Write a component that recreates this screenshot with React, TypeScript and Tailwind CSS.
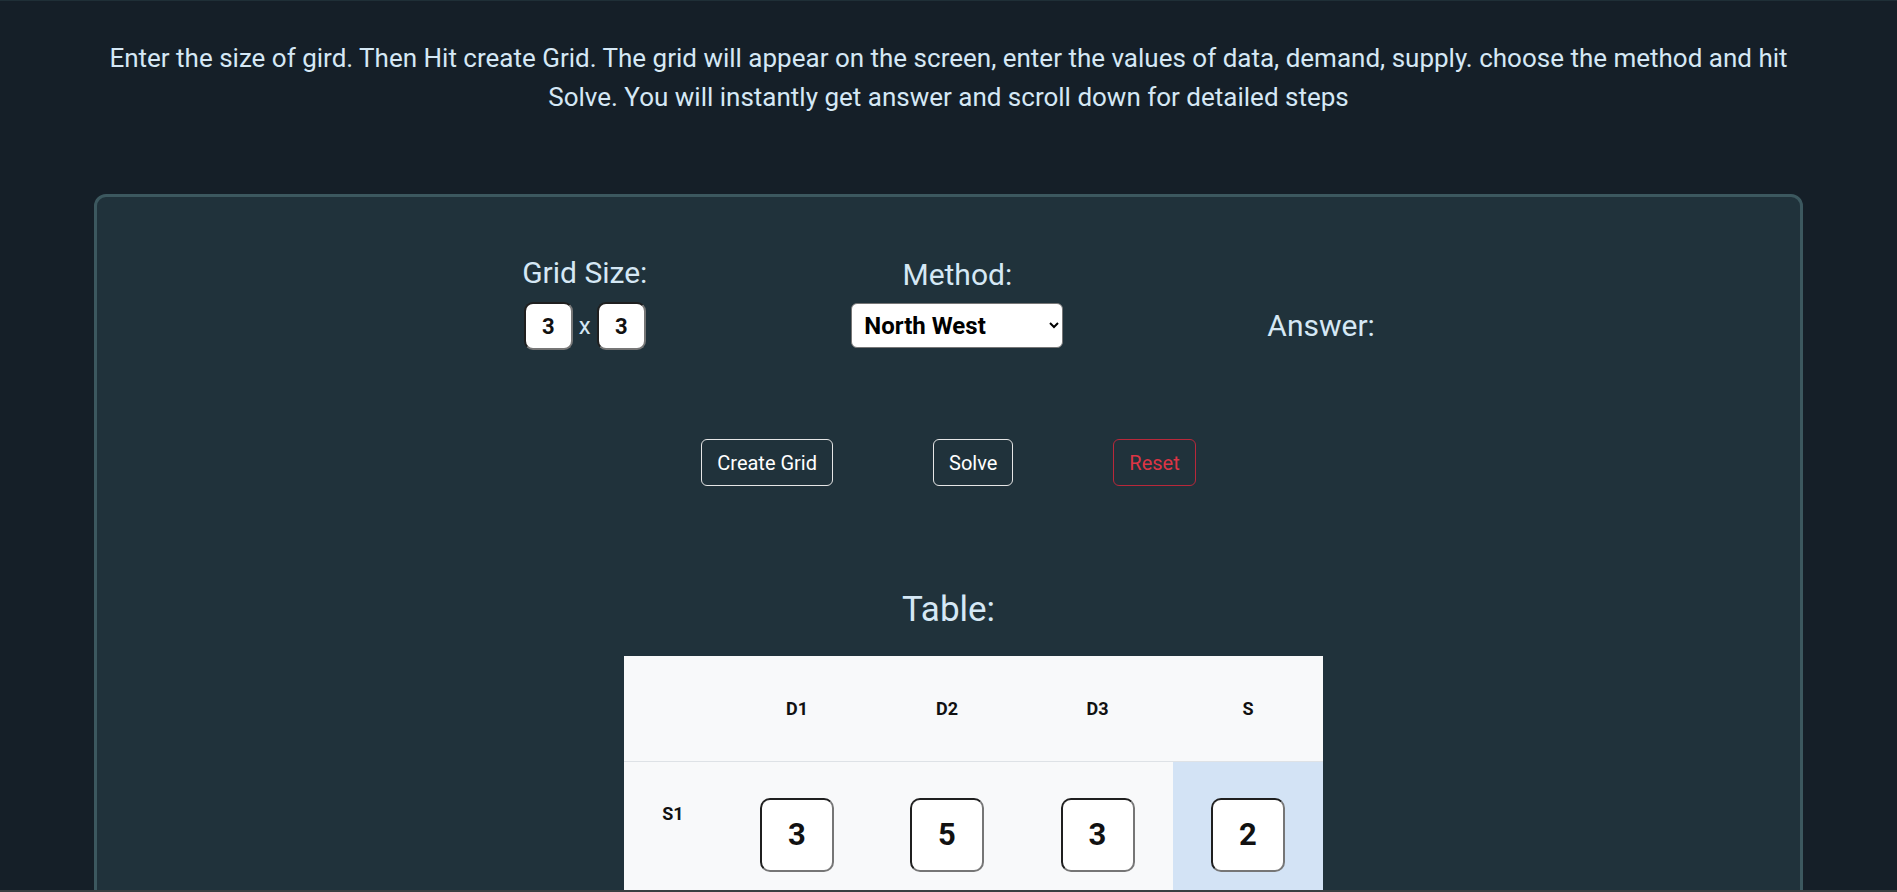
import { useState } from 'react'

const font = { fontFamily: 'Roboto, "Noto Sans", sans-serif' }

const rows = [
  { name: 'S1', cost: [3, 5, 3], supply: 2 },
  { name: 'S2', cost: [4, 2, 6], supply: 5 },
  { name: 'S3', cost: [7, 1, 2], supply: 3 },
]
const demand = [3, 4, 3]

function Cell({ value }: { value: number }) {
  return (
    <input
      defaultValue={value}
      className="w-[74px] h-[74px] rounded-[10px] border-2 border-t-[#1f1f1f] border-l-[#1f1f1f] border-b-[#767676] border-r-[#767676] bg-white text-center text-[31px] font-bold text-[#111] outline-none"
    />
  )
}

export default function App() {
  const [method, setMethod] = useState('nw')

  return (
    <div
      className="min-h-screen border-t border-[#1f2f37] bg-[#151f28] pb-20 text-[#d5e8f5]"
      style={font}
    >
      <p className="px-[90px] pt-[38px] text-center text-[26px] leading-[39px]">
        Enter the size of gird. Then Hit create Grid. The grid will appear on the screen, enter the values of data, demand, supply. choose the method and hit Solve. You will instantly get answer and scroll down for detailed steps
      </p>

      <div className="mx-auto mt-[77px] w-[1709px] rounded-[12px] border-[3px] border-[#3c585f] bg-[#20323b] pb-16 pt-[59px]">
        {/* inputs */}
        <div className="flex items-start justify-center gap-[204px]">
          <div className="flex flex-col items-center">
            <h3 className="text-[30px] leading-[34px]">Grid Size:</h3>
            <div className="mt-[12px] flex items-center gap-[6px]">
              <input
                defaultValue={3}
                className="h-[48px] w-[49px] rounded-[9px] border-2 border-t-[#1f1f1f] border-l-[#1f1f1f] border-b-[#767676] border-r-[#767676] bg-white text-center text-[22px] font-bold text-[#111] outline-none"
              />
              <span className="text-[24px]">x</span>
              <input
                defaultValue={3}
                className="h-[48px] w-[49px] rounded-[9px] border-2 border-t-[#1f1f1f] border-l-[#1f1f1f] border-b-[#767676] border-r-[#767676] bg-white text-center text-[22px] font-bold text-[#111] outline-none"
              />
            </div>
          </div>

          <div className="flex flex-col items-center">
            <h3 className="text-[30px] leading-[34px] mt-[2px]">Method:</h3>
            <select
              value={method}
              onChange={(e) => setMethod(e.target.value)}
              className="mt-[11px] h-[45px] w-[212px] rounded-[6px] border border-[#767676] bg-white pl-[8px] text-[24px] font-bold text-black"
            >
              <option value="nw">North West</option>
              <option value="lc">Least Cost</option>
              <option value="vam">Vogel</option>
            </select>
          </div>

          <div className="mt-[53px]">
            <h3 className="text-[30px] leading-[34px]">Answer:</h3>
          </div>
        </div>

        {/* buttons */}
        <div className="mt-[89px] flex justify-center gap-[100px]">
          <button className="h-[47px] rounded-[6px] border border-[#e6e6e6] px-[15px] text-[20px] text-white">
            Create Grid
          </button>
          <button className="h-[47px] rounded-[6px] border border-[#e6e6e6] px-[15px] text-[20px] text-white">
            Solve
          </button>
          <button className="h-[47px] rounded-[6px] border border-[#b8283a] px-[15px] text-[20px] text-[#dc3545]">
            Reset
          </button>
        </div>

        {/* table */}
        <h2 className="mt-[104px] text-center text-[35px] leading-[40px]">Table:</h2>
        <div className="mt-[26px] flex justify-center pl-[50px]">
          <table className="w-[699px] border-collapse bg-[#f8f9fa] text-[18px] font-bold text-[#111]">
            <thead>
              <tr className="border-b border-[#dee2e6]">
                <th className="h-[105px] w-[98px]"></th>
                <th className="w-[150px]">D1</th>
                <th className="w-[150px]">D2</th>
                <th className="w-[151px]">D3</th>
                <th className="w-[150px]">S</th>
              </tr>
            </thead>
            <tbody>
              {rows.map((r) => (
                <tr key={r.name} className="border-b border-[#dee2e6]">
                  <td className="pt-[38px] text-center align-top">{r.name}</td>
                  {r.cost.map((c, i) => (
                    <td key={i} className="pb-[39px] pt-[36px] text-center align-top">
                      <Cell value={c} />
                    </td>
                  ))}
                  <td className="bg-[#d3e3f5] pb-[39px] pt-[36px] text-center align-top">
                    <Cell value={r.supply} />
                  </td>
                </tr>
              ))}
              <tr>
                <td className="pt-[38px] text-center align-top">D</td>
                {demand.map((d, i) => (
                  <td key={i} className="bg-[#d3e3f5] pb-[39px] pt-[36px] text-center align-top">
                    <Cell value={d} />
                  </td>
                ))}
                <td></td>
              </tr>
            </tbody>
          </table>
        </div>
      </div>

      <div className="fixed bottom-0 left-0 right-0 h-[2px] bg-[#3a3f40]"></div>
    </div>
  )
}
